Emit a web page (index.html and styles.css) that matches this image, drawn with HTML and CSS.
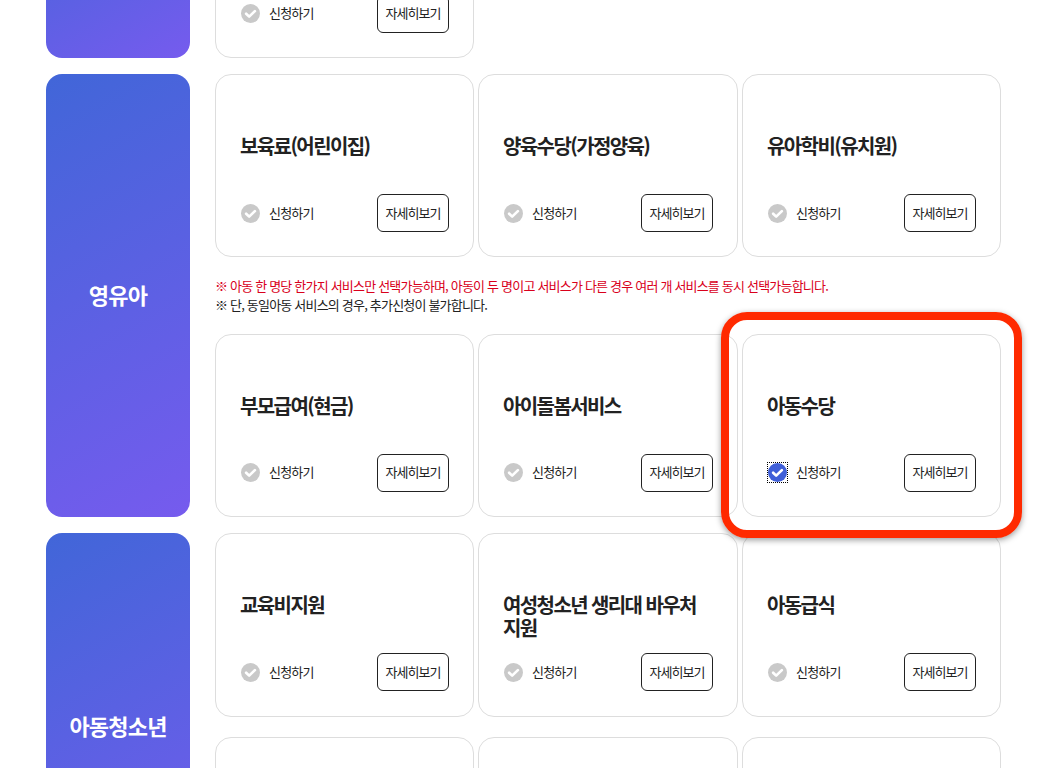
FILE: index.html
```html
<!DOCTYPE html>
<html lang="ko">
<head>
	<meta charset="UTF-8">
	<title>서비스 선택</title>
	<link rel="stylesheet" href="styles.css">
</head>
<body>
<svg class="defs" width="0" height="0">
	<symbol id="chk" viewBox="0 0 20 20">
		<circle cx="10" cy="10" r="10" fill="currentColor"/>
		<path d="M5.4 10.2l3.2 3.1 6-5.8" fill="none" stroke="#fff" stroke-width="2.8" stroke-linecap="round" stroke-linejoin="round"/>
	</symbol>
</svg>
<div class="wrap">
	<section class="group group-first">
		<h2 class="tit"></h2>
		<div class="body">
			<div class="cards">
				<div class="card">
					<h3></h3>
					<div class="foot">
						<label class="chk"><svg class="ico"><use href="#chk"/></svg><span>신청하기</span></label>
						<a class="more">자세히보기</a>
					</div>
				</div>
			</div>
		</div>
	</section>

	<section class="group">
		<h2 class="tit">영유아</h2>
		<div class="body">
			<div class="cards">
				<div class="card">
					<h3>보육료(어린이집)</h3>
					<div class="foot">
						<label class="chk"><svg class="ico"><use href="#chk"/></svg><span>신청하기</span></label>
						<a class="more">자세히보기</a>
					</div>
				</div>
				<div class="card">
					<h3>양육수당(가정양육)</h3>
					<div class="foot">
						<label class="chk"><svg class="ico"><use href="#chk"/></svg><span>신청하기</span></label>
						<a class="more">자세히보기</a>
					</div>
				</div>
				<div class="card">
					<h3>유아학비(유치원)</h3>
					<div class="foot">
						<label class="chk"><svg class="ico"><use href="#chk"/></svg><span>신청하기</span></label>
						<a class="more">자세히보기</a>
					</div>
				</div>
			</div>
			<div class="notice">
				<p class="red">※ 아동 한 명당 한가지 서비스만 선택가능하며, 아동이 두 명이고 서비스가 다른 경우 여러 개 서비스를 동시 선택가능합니다.</p>
				<p>※ 단, 동일아동 서비스의 경우, 추가신청이 불가합니다.</p>
			</div>
			<div class="cards">
				<div class="card">
					<h3>부모급여(현금)</h3>
					<div class="foot">
						<label class="chk"><svg class="ico"><use href="#chk"/></svg><span>신청하기</span></label>
						<a class="more">자세히보기</a>
					</div>
				</div>
				<div class="card">
					<h3>아이돌봄서비스</h3>
					<div class="foot">
						<label class="chk"><svg class="ico"><use href="#chk"/></svg><span>신청하기</span></label>
						<a class="more">자세히보기</a>
					</div>
				</div>
				<div class="card card-mark">
					<h3>아동수당</h3>
					<div class="foot">
						<label class="chk on"><svg class="ico"><use href="#chk"/></svg><span>신청하기</span></label>
						<a class="more">자세히보기</a>
					</div>
				</div>
			</div>
		</div>
	</section>

	<section class="group">
		<h2 class="tit">아동청소년</h2>
		<div class="body">
			<div class="cards cards-gap">
				<div class="card">
					<h3>교육비지원</h3>
					<div class="foot">
						<label class="chk"><svg class="ico"><use href="#chk"/></svg><span>신청하기</span></label>
						<a class="more">자세히보기</a>
					</div>
				</div>
				<div class="card">
					<h3>여성청소년 생리대 바우처 지원</h3>
					<div class="foot">
						<label class="chk"><svg class="ico"><use href="#chk"/></svg><span>신청하기</span></label>
						<a class="more">자세히보기</a>
					</div>
				</div>
				<div class="card">
					<h3>아동급식</h3>
					<div class="foot">
						<label class="chk"><svg class="ico"><use href="#chk"/></svg><span>신청하기</span></label>
						<a class="more">자세히보기</a>
					</div>
				</div>
				<div class="card"></div>
				<div class="card"></div>
				<div class="card"></div>
			</div>
		</div>
	</section>
</div>
</body>
</html>
```

FILE: styles.css
```css
html, body {
  margin: 0;
  height: 768px;
  overflow: hidden;
  background: #fff;
}
body {
  font-family: "Noto Sans CJK KR", "Noto Sans", sans-serif;
  color: #222;
}
h2, h3, p {
  margin: 0;
}
.defs {
  display: block;
  height: 0;
}
.wrap {
  width: 955px;
  margin-left: 46px;
}
.group {
  display: flex;
  gap: 25px;
  margin-bottom: 16px;
}
.group-first {
  margin-top: -125.3px;
}
.tit {
  flex: 0 0 144px;
  box-sizing: border-box;
  padding-bottom: 3px;
  display: flex;
  align-items: center;
  justify-content: center;
  border-radius: 16px;
  background: linear-gradient(150deg, #4166d8 0%, #765bee 100%);
  color: #fff;
  font-size: 22px;
  font-weight: 700;
  letter-spacing: -0.8px;
}
.body {
  flex: 1;
  min-width: 0;
}
.cards {
  display: grid;
  grid-template-columns: 259px 260px 259px;
  column-gap: 4px;
}
.cards-gap {
  row-gap: 20px;
}
.card {
  box-sizing: border-box;
  height: 183.3px;
  padding: 59px 24px 0;
  border: 1px solid #ddd;
  border-radius: 16px;
  background: #fff;
}
.card h3 {
  height: 45px;
  font-size: 20px;
  line-height: 23px;
  font-weight: 700;
  letter-spacing: -1.6px;
  color: #222;
}
.foot {
  display: flex;
  align-items: center;
  justify-content: space-between;
  margin-top: 15px;
}
.chk {
  display: flex;
  align-items: center;
  gap: 9px;
  padding-left: 1px;
  font-size: 13px;
  letter-spacing: -0.8px;
  color: #222;
}
.chk span {
  padding-bottom: 2px;
}
.ico {
  width: 19px;
  height: 19px;
  color: #c9c9c9;
}
.chk.on .ico {
  color: #3f5fd8;
  outline: 1px dotted #000;
}
.more {
  box-sizing: border-box;
  width: 72px;
  height: 38px;
  padding-bottom: 2px;
  display: flex;
  align-items: center;
  justify-content: center;
  border: 1px solid #222;
  border-radius: 6px;
  font-size: 13px;
  letter-spacing: -1px;
}
.notice {
  height: 76.7px;
  box-sizing: border-box;
  padding-top: 19px;
  font-size: 13px;
  line-height: 19px;
  letter-spacing: -0.8px;
}
.red {
  color: #d9001b;
}
.card-mark {
  position: relative;
}
.card-mark::after {
  content: "";
  position: absolute;
  top: -23px;
  left: -22px;
  right: -22px;
  bottom: -22px;
  border: 8px solid #ff2a00;
  border-radius: 26px;
  box-shadow: 0 2px 6px rgba(0, 0, 0, 0.4);
}
```
